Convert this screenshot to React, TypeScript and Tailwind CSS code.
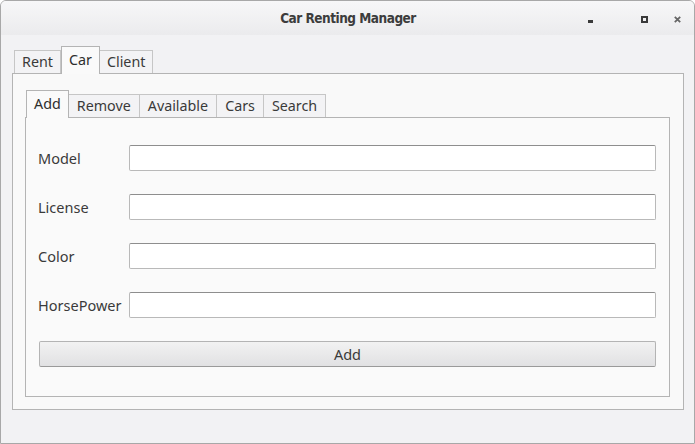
import React from 'react'

const font = { fontFamily: '"Noto Sans", "Open Sans", sans-serif' }

const outerTabs = ['Rent', 'Car', 'Client']
const innerTabs = ['Add', 'Remove', 'Available', 'Cars', 'Search']
const fields = ['Model', 'License', 'Color', 'HorsePower']

const Tab = ({
  label,
  active,
  first,
  wide,
}: {
  label: string
  active: boolean
  first: boolean
  wide?: boolean
}) => {
  if (active) {
    return (
      <div className="relative z-10 -mb-px flex h-[28px] items-center border border-b-0 border-[#b4b4b4] bg-[#fafafa] px-[7px] pb-[1px] text-[14.3px] text-[#2e2e2e]">
        {label}
      </div>
    )
  }
  return (
    <div
      className={`flex h-[23px] items-center border-t border-r border-[#c6c6c6] bg-[#f3f3f5] text-[14.3px] text-[#3a3a3a] ${first ? 'border-l' : ''} ${wide ? 'px-[8px]' : 'px-[7px]'}`}
    >
      {label}
    </div>
  )
}

export default function App() {
  return (
    <div style={font} className="h-[444px] w-[695px] overflow-hidden bg-white">
      <div className="flex h-[444px] w-[695px] flex-col overflow-hidden rounded-t-[6px] border border-[#a8a8a8] bg-[#f2f2f4]">
        {/* title bar */}
        <div className="relative flex h-[34px] shrink-0 items-center justify-center bg-gradient-to-b from-[#f7f7f8] to-[#ebebed]">
          <span
            style={{ fontFamily: '"DejaVu Sans Condensed", "DejaVu Sans", sans-serif' }}
            className="ml-[1px] text-[13.5px] font-bold tracking-[-0.5px] text-[#3c3c3c]"
          >
            Car Renting Manager
          </span>
          <div className="absolute right-[13px] top-[14px] flex items-center">
            <div className="flex h-[8px] w-[53px] items-end justify-start">
              <div className="h-[3px] w-[5px] bg-[#3a3a3a]" />
            </div>
            <div className="flex h-[8px] w-[33px] items-center justify-start">
              <div className="h-[7px] w-[7px] border-2 border-[#3a3a3a]" />
            </div>
            <svg width="7" height="7" viewBox="0 0 7 7">
              <path d="M0.8 0.8 L6.2 6.2 M6.2 0.8 L0.8 6.2" stroke="#666" strokeWidth="1.8" />
            </svg>
          </div>
        </div>

        {/* body */}
        <div className="flex flex-col pl-[11px] pr-[10px] pt-[11px]">
          <div className="flex items-end pl-[2px]">
            {outerTabs.map((t, i) => (
              <Tab key={t} label={t} active={t === 'Car'} first={i === 0} />
            ))}
          </div>
          <div className="h-[337px] border border-[#b4b4b4] bg-[#f9f9f9] pl-[12px] pr-[13px] pt-[16px]">
            <div className="flex items-end pl-[1px]">
              {innerTabs.map((t, i) => (
                <Tab key={t} label={t} active={t === 'Add'} first={i === 0} wide />
              ))}
            </div>
            <div className="h-[280px] border border-[#b4b4b4] bg-[#fafafa] pl-[12px] pr-[13px] pt-[27px]">
              <div className="flex flex-col gap-[23px]">
                {fields.map((f) => (
                  <div key={f} className="flex h-[26px] items-center">
                    <span className="w-[91px] shrink-0 pt-[1px] text-[14.5px] text-[#3a3a3a]">{f}</span>
                    <div className="h-[26px] flex-1 rounded-[2px] border border-[#b9b9b9] border-t-[#8e8e8e] bg-white" />
                  </div>
                ))}
                <div className="ml-[1px] flex h-[26px] items-center justify-center rounded-[2px] border border-[#b4b4b4] border-b-[#9a9a9a] bg-gradient-to-b from-[#f2f2f2] to-[#e1e1e3] pt-[1px] text-[14.5px] text-[#3a3a3a]">
                  Add
                </div>
              </div>
            </div>
          </div>
        </div>
      </div>
    </div>
  )
}
